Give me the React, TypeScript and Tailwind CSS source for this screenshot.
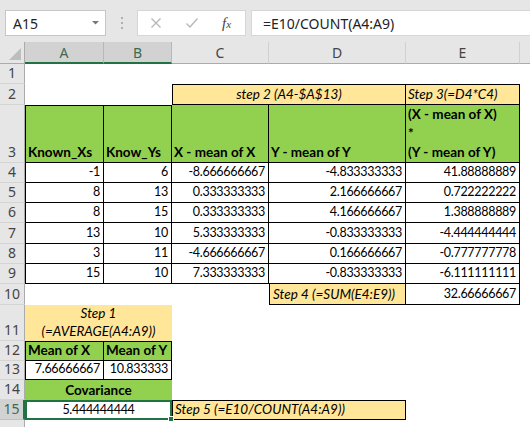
import React from "react";

const cellFont = { fontFamily: "Lato, 'Liberation Sans', sans-serif" };
const uiFont = { fontFamily: "'Noto Sans', 'Open Sans', sans-serif" };

const colHeaders = [
  { label: "A", col: "col-start-2", sel: true },
  { label: "B", col: "col-start-3", sel: true },
  { label: "C", col: "col-start-4", sel: false },
  { label: "D", col: "col-start-5", sel: false },
  { label: "E", col: "col-start-6", sel: false },
];

const rowHeaders = [
  { n: 1, row: "row-start-2" },
  { n: 2, row: "row-start-3" },
  { n: 3, row: "row-start-4" },
  { n: 4, row: "row-start-5" },
  { n: 5, row: "row-start-6" },
  { n: 6, row: "row-start-7" },
  { n: 7, row: "row-start-8" },
  { n: 8, row: "row-start-9" },
  { n: 9, row: "row-start-10" },
  { n: 10, row: "row-start-11" },
  { n: 11, row: "row-start-12" },
  { n: 12, row: "row-start-13" },
  { n: 13, row: "row-start-14" },
  { n: 14, row: "row-start-15" },
  { n: 15, row: "row-start-16" },
];

// data rows 4..9
const dataRows = [
  { row: "row-start-5", a: "-1", b: "6", c: "-8.666666667", d: "-4.833333333", e: "41.88888889" },
  { row: "row-start-6", a: "8", b: "13", c: "0.333333333", d: "2.166666667", e: "0.722222222" },
  { row: "row-start-7", a: "8", b: "15", c: "0.333333333", d: "4.166666667", e: "1.388888889" },
  { row: "row-start-8", a: "13", b: "10", c: "5.333333333", d: "-0.833333333", e: "-4.444444444" },
  { row: "row-start-9", a: "3", b: "11", c: "-4.666666667", d: "0.166666667", e: "-0.777777778" },
  { row: "row-start-10", a: "15", b: "10", c: "7.333333333", d: "-0.833333333", e: "-6.111111111" },
];

function Num({ className, children }: { className: string; children: React.ReactNode }) {
  return (
    <div
      className={`flex items-end justify-end pr-[3px] pb-[2px] border-r border-b border-black bg-white text-[12.5px] tracking-[-0.3px] leading-[16px] text-black whitespace-nowrap ${className}`}
    >
      {children}
    </div>
  );
}

export default function App() {
  return (
    <div className="w-[530px] h-[427px] overflow-hidden bg-white relative">
      {/* Formula bar */}
      <div className="h-[42px] bg-[#e6e6e6] flex items-start pt-[10px]" style={uiFont}>
        <div className="ml-[5px] w-[101px] h-[26px] bg-white border border-[#c6c6c6] flex items-center justify-between pl-[7px] pr-[5px] text-[14px] text-[#222]">
          <span>A15</span>
          <svg width="9" height="6" viewBox="0 0 9 6">
            <path d="M1 1 L4.5 4.5 L8 1 Z" fill="#777" />
          </svg>
        </div>
        <div className="w-[31px] h-[26px] flex flex-col items-center justify-center gap-[3px]">
          <span className="w-[2px] h-[2px] bg-[#b0b0b0]" />
          <span className="w-[2px] h-[2px] bg-[#b0b0b0]" />
          <span className="w-[2px] h-[2px] bg-[#b0b0b0]" />
        </div>
        <div className="w-[109px] h-[26px] bg-white border border-[#d6d6d6] flex items-center">
          <svg width="12" height="12" viewBox="0 0 12 12" className="ml-[12px]">
            <path d="M1.5 1.5 L10.5 10.5 M10.5 1.5 L1.5 10.5" stroke="#b8b8b8" strokeWidth="1.4" />
          </svg>
          <svg width="14" height="12" viewBox="0 0 14 12" className="ml-[23px]">
            <path d="M1.5 6.5 L5 10 L12.5 1.5" stroke="#b8b8b8" strokeWidth="1.4" fill="none" />
          </svg>
          <span
            className="ml-[23px] italic text-[15px] text-[#444] leading-none"
            style={{ fontFamily: "'Liberation Serif', serif" }}
          >
            f<span className="text-[11px]">x</span>
          </span>
        </div>
        <div className="ml-[5px] flex-1 h-[26px] bg-white border-y border-l border-[#d6d6d6] flex items-center pl-[11px] text-[14px] text-[#222]">
          =E10/COUNT(A4:A9)
        </div>
      </div>

      {/* Sheet grid */}
      <div
        className="grid grid-cols-[25px_79px_68px_97px_137px_114px_10px] grid-rows-[22px_20px_21px_58px_20px_20px_20px_21px_20px_20px_21px_36px_20px_19px_20px_20px_20px] text-[13.5px] leading-[17px] whitespace-nowrap"
        style={cellFont}
      >
        {/* corner */}
        <div className="col-start-1 row-start-1 bg-[#e6e6e6] border-r border-b border-[#ababab] relative">
          <svg width="12" height="12" viewBox="0 0 12 12" className="absolute right-[3px] bottom-[3px]">
            <path d="M12 0 L12 12 L0 12 Z" fill="#bdbdbd" />
          </svg>
        </div>

        {/* column headers */}
        {colHeaders.map((h) => (
          <div
            key={h.label}
            className={`${h.col} row-start-1 flex items-center justify-center text-[14px] border-r ${
              h.sel
                ? "bg-[#d2d2d2] text-[#3a6b50] border-[#b8b8b8] border-b-2 border-b-[#217346]"
                : "bg-[#e6e6e6] text-[#444] border-[#d0d0d0] border-b border-b-[#ababab]"
            }`}
            style={uiFont}
          >
            {h.label}
          </div>
        ))}
        <div className="col-start-7 row-start-1 bg-[#e6e6e6] border-b border-[#ababab]" />

        {/* row headers */}
        {rowHeaders.map((r) => (
          <div
            key={r.n}
            className={`col-start-1 ${r.row} flex items-end justify-center pb-[1px] text-[14px] leading-[18px] border-b ${
              r.n === 15
                ? "bg-[#d2d2d2] text-[#3a6b50] border-[#c0c0c0] border-r-2 border-r-[#217346]"
                : "bg-[#e6e6e6] text-[#444] border-[#d4d4d4] border-r border-r-[#ababab]"
            }`}
            style={uiFont}
          >
            {r.n}
          </div>
        ))}
        <div className="col-start-1 row-start-17 bg-[#e6e6e6] border-r border-[#ababab]" />

        {/* Row 2 */}
        <div className="col-start-4 col-span-2 row-start-3 bg-[#ffe699] border border-black flex items-end justify-center pb-[1px] italic">
          step 2 (A4-$A$13)
        </div>
        <div className="col-start-6 row-start-3 bg-[#ffe699] border-y border-r border-black flex items-end pl-[2px] pb-[1px] italic">
          Step 3(=D4*C4)
        </div>

        {/* Row 3 headers */}
        <div className="col-start-2 row-start-4 bg-[#92d050] border-l border-r border-b border-black flex items-end pl-[2px] pb-[1px] font-bold">
          Known_Xs
        </div>
        <div className="col-start-3 row-start-4 bg-[#92d050] border-r border-b border-black flex items-end pl-[2px] pb-[1px] font-bold">
          Know_Ys
        </div>
        <div className="col-start-4 row-start-4 bg-[#92d050] border-r border-b border-black flex items-end pl-[2px] pb-[1px] font-bold">
          X - mean of X
        </div>
        <div className="col-start-5 row-start-4 bg-[#92d050] border-r border-b border-black flex items-end pl-[2px] pb-[1px] font-bold">
          Y - mean of Y
        </div>
        <div className="col-start-6 row-start-4 bg-[#92d050] border-r border-b border-black flex flex-col justify-end pl-[2px] pb-[0px] font-bold leading-[19px]">
          <span>(X - mean of X)</span>
          <span>*</span>
          <span>(Y - mean of Y)</span>
        </div>
        <div className="col-start-2 col-span-2 row-start-4 border-t border-black pointer-events-none" />

        {/* Data rows 4-9 */}
        {dataRows.map((r) => (
          <React.Fragment key={r.row}>
            <Num className={`col-start-2 ${r.row} border-l`}>{r.a}</Num>
            <Num className={`col-start-3 ${r.row}`}>{r.b}</Num>
            <Num className={`col-start-4 ${r.row}`}>{r.c}</Num>
            <Num className={`col-start-5 ${r.row}`}>{r.d}</Num>
            <Num className={`col-start-6 ${r.row}`}>{r.e}</Num>
          </React.Fragment>
        ))}

        {/* Row 10 */}
        <div className="col-start-5 row-start-11 bg-[#ffe699] border-l border-r border-b border-black flex items-end pl-[3px] pb-[1px] italic">
          Step 4 (=SUM(E4:E9))
        </div>
        <Num className="col-start-6 row-start-11">32.66666667</Num>

        {/* Row 11 */}
        <div className="col-start-2 col-span-2 row-start-12 bg-[#ffe699] flex flex-col items-center justify-end pb-[1px] italic leading-[18px]">
          <span>Step 1</span>
          <span>(=AVERAGE(A4:A9))</span>
        </div>

        {/* Row 12 */}
        <div className="col-start-2 row-start-13 bg-[#92d050] border border-black flex items-end pl-[2px] pb-[1px] font-bold">
          Mean of X
        </div>
        <div className="col-start-3 row-start-13 bg-[#92d050] border-y border-r border-black flex items-end pl-[2px] pb-[1px] font-bold">
          Mean of Y
        </div>

        {/* Row 13 */}
        <Num className="col-start-2 row-start-14 border-l">7.66666667</Num>
        <Num className="col-start-3 row-start-14">10.833333</Num>

        {/* Row 14 */}
        <div className="col-start-2 col-span-2 row-start-15 bg-[#92d050] flex items-end justify-center pb-[1px] font-bold">
          Covariance
        </div>

        {/* Row 15 */}
        <div className="col-start-2 col-span-2 row-start-16 bg-white border-2 border-[#217346] flex items-end justify-center pb-[0px] text-[12.5px] tracking-[-0.3px] leading-[16px] relative">
          5.444444444
          <span className="absolute -right-[4px] -bottom-[4px] w-[6px] h-[6px] bg-[#217346] border border-white" />
        </div>
        <div className="col-start-4 col-span-2 row-start-16 bg-[#ffe699] border border-black flex items-end pl-[2px] pb-[1px] italic">
          Step 5 (=E10/COUNT(A4:A9))
        </div>
      </div>
    </div>
  );
}
